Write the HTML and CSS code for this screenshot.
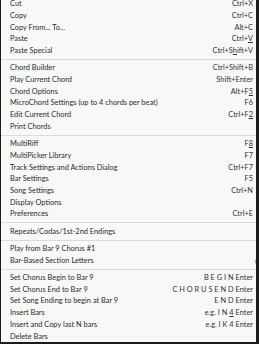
FILE: index.html
```html
<!DOCTYPE html>
<html>
<head>
<meta charset="utf-8">
<link rel="stylesheet" href="styles.css">
</head>
<body>
<div class="frame">
  <ul class="menu">
    <li class="item"><span class="label">Cut</span><span class="key">Ctrl+X</span></li>
    <li class="item"><span class="label">Copy</span><span class="key">Ctrl+C</span></li>
    <li class="item"><span class="label">Copy From... To...</span><span class="key">Alt+C</span></li>
    <li class="item"><span class="label">Paste</span><span class="key">Ctrl+<u>V</u></span></li>
    <li class="item"><span class="label">Paste Special</span><span class="key">Ctrl+S<u>h</u>ift+V</span></li>
    <li class="sep"></li>
    <li class="item"><span class="label">Chord Builder</span><span class="key">Ctrl+Shift+B</span></li>
    <li class="item"><span class="label">Play Current Chord</span><span class="key">Shift+Enter</span></li>
    <li class="item"><span class="label">Chord Options</span><span class="key">Alt+F<u>5</u></span></li>
    <li class="item"><span class="label">MicroChord Settings (up to 4 chords per beat)</span><span class="key">F6</span></li>
    <li class="item"><span class="label">Edit Current Chord</span><span class="key">Ctrl+F<u>2</u></span></li>
    <li class="item"><span class="label">Print Chords</span><span class="key"></span></li>
    <li class="sep"></li>
    <li class="item"><span class="label">MultiRiff</span><span class="key">F<u>8</u></span></li>
    <li class="item"><span class="label">MultiPicker Library</span><span class="key">F7</span></li>
    <li class="item"><span class="label">Track Settings and Actions Dialog</span><span class="key">Ctrl+F7</span></li>
    <li class="item"><span class="label">Bar Settings</span><span class="key">F5</span></li>
    <li class="item"><span class="label">Song Settings</span><span class="key">Ctrl+N</span></li>
    <li class="item"><span class="label">Display Options</span><span class="key"></span></li>
    <li class="item"><span class="label">Preferences</span><span class="key">Ctrl+E</span></li>
    <li class="sep"></li>
    <li class="item"><span class="label">Repeats/Codas/1st-2nd Endings</span><span class="key"></span></li>
    <li class="sep"></li>
    <li class="item"><span class="label">Play from Bar 9 Chorus #1</span><span class="key"></span></li>
    <li class="item"><span class="label">Bar-Based Section Letters</span><span class="arrow">›</span></li>
    <li class="sep"></li>
    <li class="item"><span class="label">Set Chorus Begin to Bar 9</span><span class="key">B E G I N Enter</span></li>
    <li class="item"><span class="label">Set Chorus End to Bar 9</span><span class="key">C H O R U S E N D Enter</span></li>
    <li class="item"><span class="label">Set Song Ending to begin at Bar 9</span><span class="key">E N D Enter</span></li>
    <li class="item"><span class="label">Insert Bars</span><span class="key">e.g. I N <u>4</u> Enter</span></li>
    <li class="item"><span class="label">Insert and Copy last N bars</span><span class="key">e.g. I K 4 Enter</span></li>
    <li class="item"><span class="label">Delete Bars</span><span class="key"></span></li>
  </ul>
</div>
</body>
</html>
```
FILE: styles.css
```css
html, body {
  margin: 0;
  padding: 0;
  background: #1c1c1c;
  overflow: hidden;
}
.frame {
  width: 259px;
  height: 344px;
  box-sizing: border-box;
  background: #1c1c1c;
  padding: 0 3px 2px 1px;
  overflow: hidden;
}
.menu {
  list-style: none;
  margin: 0;
  padding: 0;
  height: 342px;
  background: #f8f8f8;
  overflow: hidden;
  font-family: "Lato", "Open Sans", sans-serif;
  font-size: 7.4px;
  color: #2b2b2b;
}
.menu > :first-child {
  margin-top: -1.8px;
}
.item {
  display: flex;
  justify-content: space-between;
  align-items: center;
  height: 11.7px;
  line-height: 11.7px;
  padding: 0 3px 0 9px;
  white-space: nowrap;
}
.key {
  color: #333;
}
.arrow {
  margin-right: -4px;
  font-size: 9px;
}
.sep {
  height: 5.7px;
  display: flex;
  align-items: center;
}
.sep::after {
  content: "";
  display: block;
  width: 100%;
  height: 1px;
  background: #dadada;
}
```
